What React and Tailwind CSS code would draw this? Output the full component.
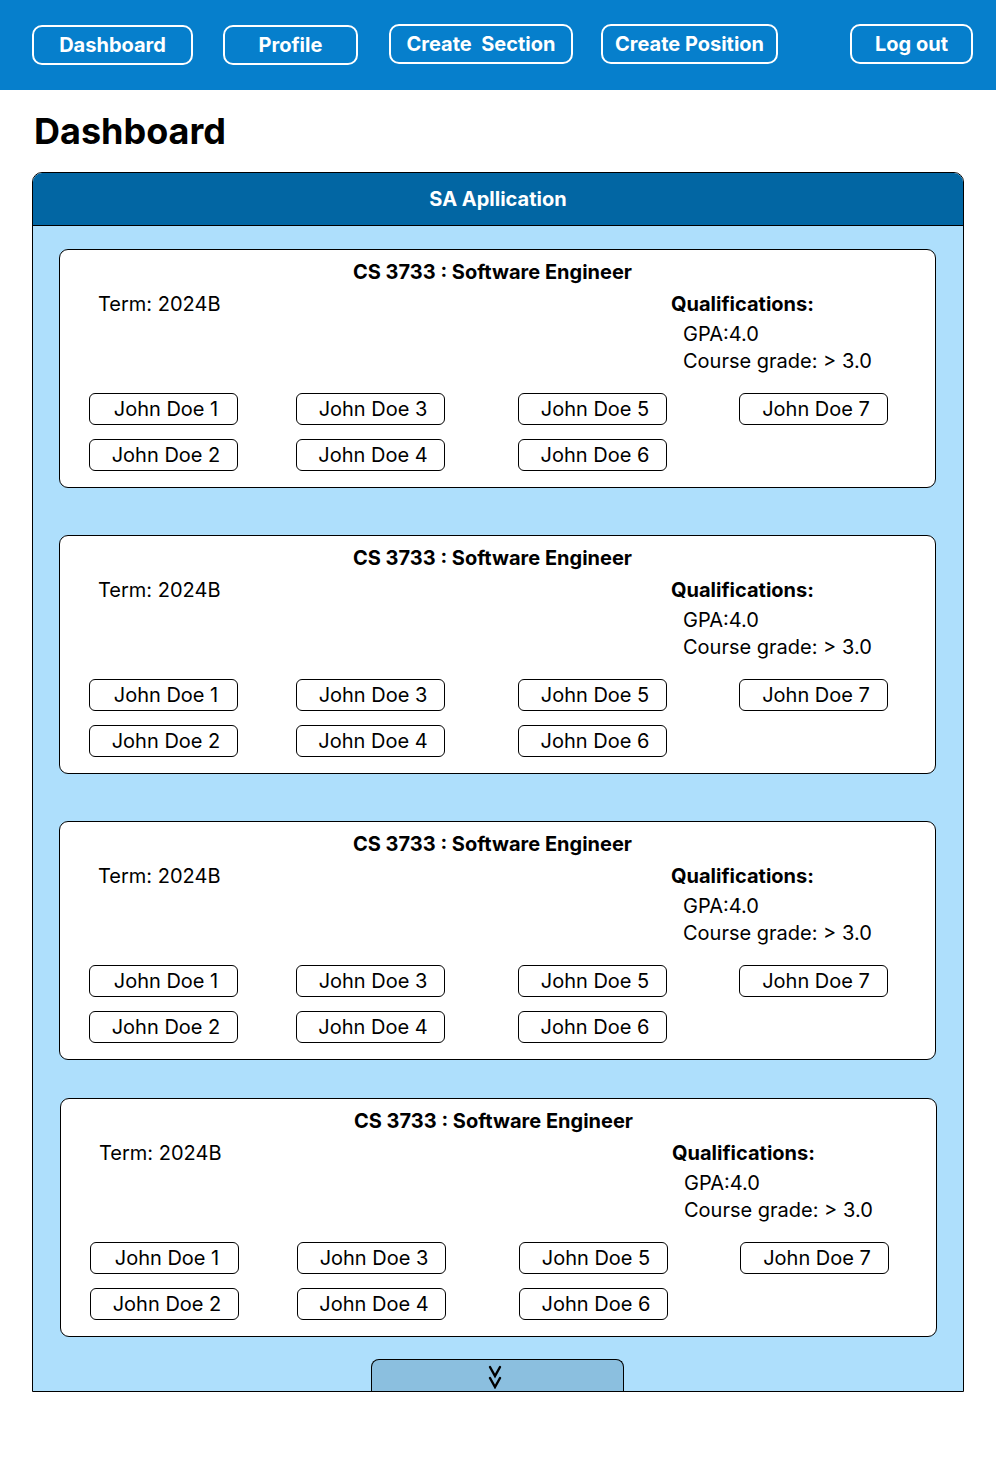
import React from 'react';

const navItems = [
  { label: 'Dashboard', cls: 'ml-[32px] w-[161px] h-[40px] mt-[25px]' },
  { label: 'Profile', cls: 'ml-[30px] w-[135px] h-[40px] mt-[25px]' },
  { label: 'Create  Section', cls: 'ml-[31px] w-[184px] h-[40px] mt-[24px]' },
  { label: 'Create Position', cls: 'ml-[28px] w-[177px] h-[40px] mt-[24px]' },
  { label: 'Log out', cls: 'ml-[72px] w-[123px] h-[40px] mt-[24px]' },
];

const columns = [
  { ml: 'ml-[29px]', names: ['John Doe 1', 'John Doe 2'] },
  { ml: 'ml-[58px]', names: ['John Doe 3', 'John Doe 4'] },
  { ml: 'ml-[73px]', names: ['John Doe 5', 'John Doe 6'] },
  { ml: 'ml-[72px]', names: ['John Doe 7'] },
];

function Applicant({ name }) {
  return (
    <button className="w-[149px] h-[32px] rounded-[6px] border border-black bg-white text-[20px] leading-none text-black flex items-center justify-center pl-[5px]">
      {name}
    </button>
  );
}

function PositionCard({ className }) {
  return (
    <div className={`w-[877px] h-[239px] bg-white border border-black rounded-[9px] pt-[10px] ${className}`}>
      <h3 className="text-center text-[20px] font-bold leading-[24px] text-black pr-[10px]">
        CS 3733 : Software Engineer
      </h3>
      <div className="flex mt-[6px]">
        <div className="ml-[38px] w-[573px] text-[20px] leading-[28px]">Term: 2024B</div>
        <div className="text-[20px] leading-[28px]">
          <div className="font-bold">Qualifications:</div>
          <div className="ml-[12px] mt-[2px]">GPA:4.0</div>
          <div className="ml-[12px] -mt-[1px]">Course grade: &gt; 3.0</div>
        </div>
      </div>
      <div className="flex mt-[18px]">
        {columns.map((col, i) => (
          <div key={i} className={`${col.ml} flex flex-col gap-[14px]`}>
            {col.names.map((n) => (
              <Applicant key={n} name={n} />
            ))}
          </div>
        ))}
      </div>
    </div>
  );
}

export default function App() {
  return (
    <div className="w-[996px] min-h-[1458px] bg-white text-black" style={{ fontFamily: 'Inter, "Noto Sans", sans-serif' }}>
      <nav className="h-[90px] bg-[#067fcc] flex items-start">
        {navItems.map((item) => (
          <button
            key={item.label}
            className={`${item.cls} rounded-[10px] border-2 border-white text-white text-[20px] font-bold flex items-center justify-center whitespace-pre`}
          >
            {item.label}
          </button>
        ))}
      </nav>

      <h1 className="ml-[34px] mt-[20px] text-[36px] font-bold leading-[43px]">Dashboard</h1>

      <section className="ml-[32px] mt-[19px] w-[932px] border border-black rounded-t-[10px] overflow-hidden">
        <div className="h-[53px] bg-[#0266a3] border-b border-black flex items-center justify-center">
          <h2 className="text-white text-[20px] font-bold">SA Apllication</h2>
        </div>
        <div className="bg-[#aedffc] pt-[23px] flex flex-col">
          <PositionCard className="ml-[26px]" />
          <PositionCard className="ml-[26px] mt-[47px]" />
          <PositionCard className="ml-[26px] mt-[47px]" />
          <PositionCard className="ml-[27px] mt-[38px]" />
          <div className="ml-[338px] mt-[22px] w-[253px] h-[32px] bg-[#8bbfdf] border border-b-0 border-black rounded-t-[8px] flex justify-center pt-[5px] pr-[6px]">
            <svg width="14" height="24" viewBox="0 0 14 24" fill="none" stroke="#000" strokeWidth="2.4" strokeLinecap="round" strokeLinejoin="miter">
              <polyline points="2,2 7,11 12,2" />
              <polyline points="2,13 7,22 12,13" />
            </svg>
          </div>
        </div>
      </section>
    </div>
  );
}
